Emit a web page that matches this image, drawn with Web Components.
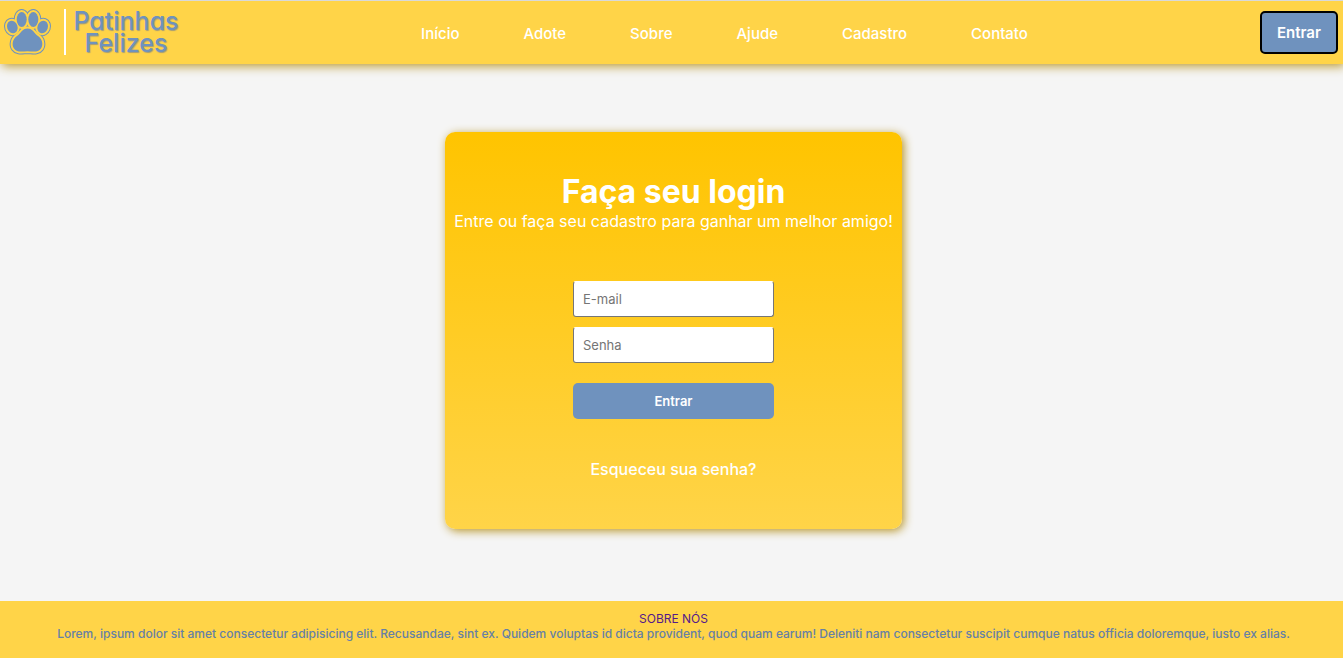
<!DOCTYPE html>
<html lang="pt-BR">
<head>
<meta charset="utf-8">
<title>Patinhas Felizes - Login</title>
<style>
html, body { margin: 0; }
body { font-family: Inter, "Liberation Sans", sans-serif; font-size: 16px; background: #f5f5f5; color: #fff; }
</style>
</head>
<body>
<login-page></login-page>
<script>
function define(name, html) {
  const template = document.createElement('template');
  template.innerHTML = html;
  customElements.define(name, class extends HTMLElement {
    constructor() {
      super();
      this.attachShadow({ mode: 'open' }).appendChild(template.content.cloneNode(true));
    }
  });
}

const paw = `
<ellipse cx="18.700" cy="11.500" rx="5" ry="7.500"/><ellipse cx="30.300" cy="11.500" rx="5" ry="7.500"/>
<ellipse cx="9.300" cy="19" rx="5.200" ry="6.300" transform="rotate(-20 9.300 19)"/><ellipse cx="39.700" cy="19" rx="5.200" ry="6.300" transform="rotate(20 39.700 19)"/>
<path d="M24.500 20.500C19 20.500 18 25.500 14 28C9.500 31 8.500 37 11 40.500C14 45 20 43.200 24.500 43.200C29 43.200 35 45 38 40.500C40.500 37 39.500 31 35 28C31 25.500 30 20.500 24.500 20.500Z"/>`;

define('site-logo', `
<style>
:host { display: block; }
a { display: flex; align-items: center; color: #6f92be; text-decoration: none; padding: 0 0 2px 3px; }
svg { display: block; width: 49px; height: 48px; }
.bar { width: 2px; height: 46px; background: #fff; margin: 0 5px 0 12px; }
.name { width: 110px; text-align: center; font-size: 25px; line-height: 22px; font-weight: 500; font-feature-settings: "cv11"; text-shadow: 1px 1px 1px #a59c78; }
</style>
<a href="#inicio">
<svg viewBox="0 0 49 48" aria-hidden="true">
<g fill="#6f92be" stroke="#6f92be" stroke-width="6">${paw}</g>
<g fill="#ffd448" stroke="#ffd448" stroke-width="4">${paw}</g>
<g fill="#6f92be">${paw}</g>
</svg>
<span class="bar"></span>
<span class="name">Patinhas<br>Felizes</span>
</a>`);

define('nav-item', `
<style>
:host { display: block; }
a { color: #fff; text-decoration: none; font-size: 15px; font-weight: 500; line-height: 20px; }
</style>
<a href="#"><slot></slot></a>`);

define('site-header', `
<style>
:host { display: block; }
header { display: flex; align-items: center; justify-content: space-between; box-sizing: border-box; height: 64px; padding-right: 5px; border-top: 1px solid #d9d9d9; background: #ffd448; box-shadow: 2px 2px 10px #b8962a; }
nav { display: flex; gap: 64px; padding: 2px 0 0 8px; }
button { box-sizing: border-box; width: 78px; height: 43px; border: 2px solid #000; border-radius: 5px; background: #6f92be; color: #fff; font: 600 15px Inter, sans-serif; padding: 0; }
</style>
<header>
<site-logo></site-logo>
<nav>
<nav-item>Início</nav-item><nav-item>Adote</nav-item><nav-item>Sobre</nav-item><nav-item>Ajude</nav-item><nav-item>Cadastro</nav-item><nav-item>Contato</nav-item>
</nav>
<button type="button">Entrar</button>
</header>`);

define('login-card', `
<style>
:host { display: block; }
section { box-sizing: border-box; padding: 40px 9px 50px; border-radius: 10px; background: linear-gradient(#ffc400, #ffd448); box-shadow: 2px 2px 10px #b8962a; text-align: center; }
h1 { margin: 0; font-size: 32px; line-height: 39px; font-weight: 700; }
p { margin: 0; line-height: 20px; }
form { display: flex; flex-direction: column; gap: 10px; width: 201px; margin: 50px auto 40px; }
input { display: block; box-sizing: border-box; width: 100%; height: 36px; padding: 0 9px; border: 1px solid #767676; border-top-color: #fff; border-radius: 3px; background: #fff; font: 13px Inter, sans-serif; color: #333; }
input::placeholder { color: #757575; opacity: 1; }
button { height: 36px; margin-top: 10px; padding: 0; border: 0; border-radius: 5px; background: #6f92be; color: #fff; font: 600 13px Inter, sans-serif; }
a { display: block; color: #fff; text-decoration: none; font-weight: 500; line-height: 20px; }
</style>
<section>
<h1>Faça seu login</h1>
<p>Entre ou faça seu cadastro para ganhar um melhor amigo!</p>
<form>
<input type="email" placeholder="E-mail" aria-label="E-mail">
<input type="password" placeholder="Senha" aria-label="Senha">
<button type="button">Entrar</button>
</form>
<a href="#senha">Esqueceu sua senha?</a>
</section>`);

define('site-footer', `
<style>
:host { display: block; }
footer { box-sizing: border-box; min-height: 57px; padding: 10px 0 16px 4px; background: #ffd448; text-align: center; font-size: 12px; line-height: 15px; color: #6680a6; }
a { color: #551a8b; text-decoration: none; }
p { margin: 0; font-weight: 500; }
</style>
<footer><a href="#sobre">SOBRE NÓS</a>
<p><slot></slot></p></footer>`);

define('login-page', `
<style>
:host { display: flex; flex-direction: column; min-height: 100vh; }
main { flex: 1; display: flex; align-items: center; justify-content: center; padding: 40px 0 44px 4px; }
</style>
<site-header></site-header>
<main><login-card></login-card></main>
<site-footer>Lorem, ipsum dolor sit amet consectetur adipisicing elit. Recusandae, sint ex. Quidem voluptas id dicta provident, quod quam earum! Deleniti nam consectetur suscipit cumque natus officia doloremque, iusto ex alias.</site-footer>`);
</script>
</body>
</html>
